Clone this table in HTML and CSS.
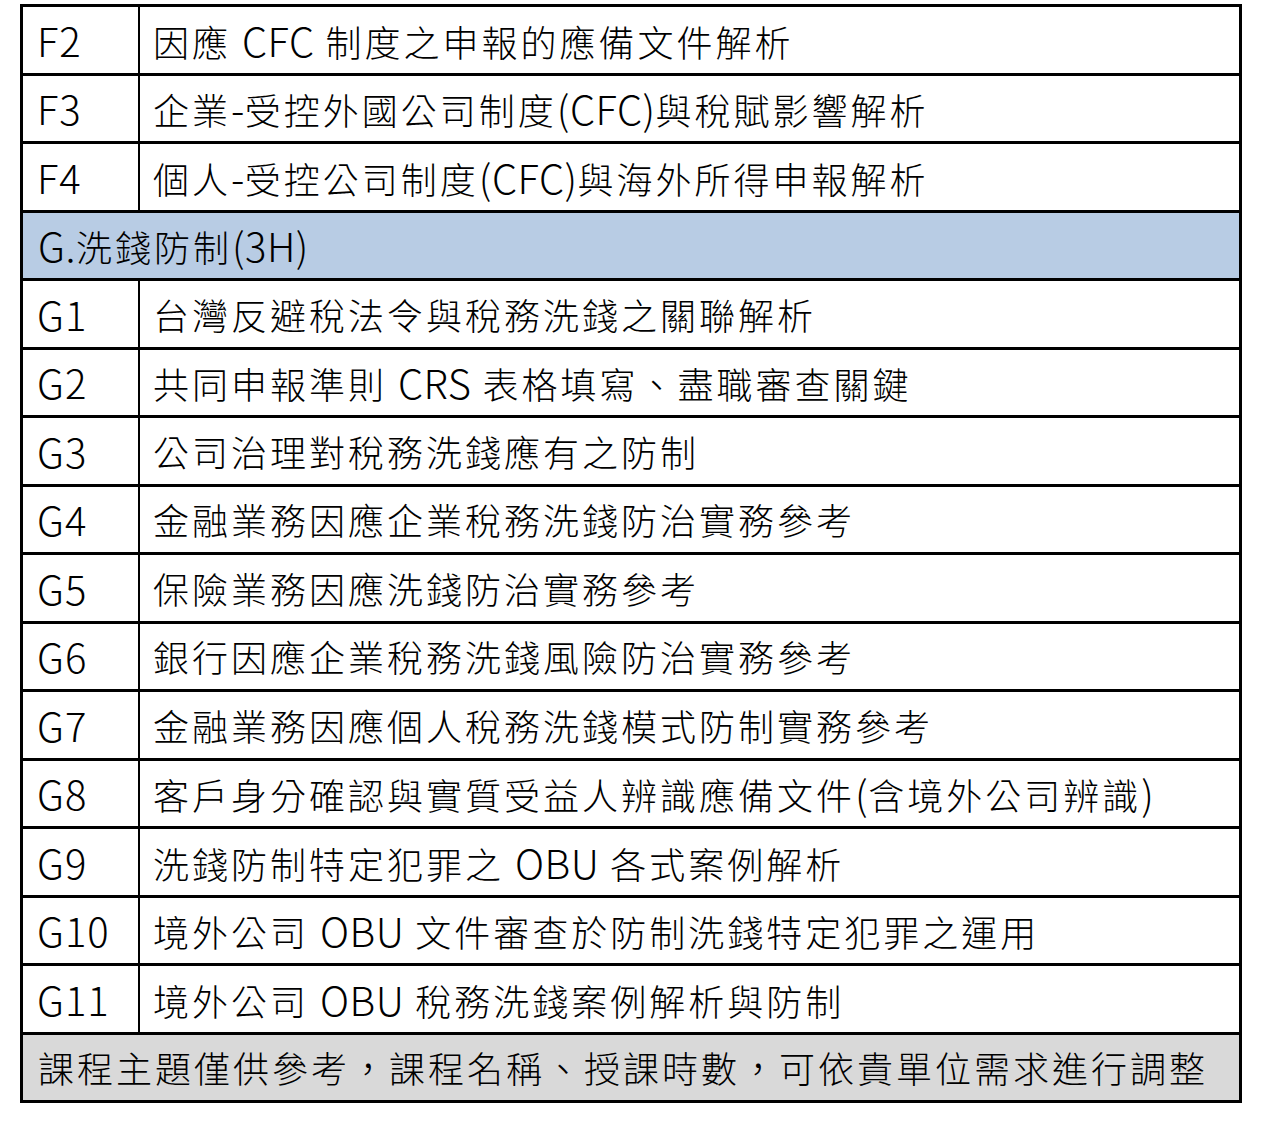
FILE: index.html
```html
<!DOCTYPE html>
<html lang="zh-Hant">
<head>
<meta charset="utf-8">
<title>課程主題</title>
<link rel="stylesheet" href="styles.css">
</head>
<body>
<table class="course-table">
  <tbody>
    <tr><td class="code">F2</td><td class="title">因應 <span class="lat">CFC</span> 制度之申報的應備文件解析</td></tr>
    <tr><td class="code">F3</td><td class="title">企業<span class="lat">-</span>受控外國公司制度<span class="lat">(CFC)</span>與稅賦影響解析</td></tr>
    <tr><td class="code">F4</td><td class="title">個人<span class="lat">-</span>受控公司制度<span class="lat">(CFC)</span>與海外所得申報解析</td></tr>
    <tr class="section"><td colspan="2"><span class="lat">G.</span>洗錢防制<span class="lat">(3H)</span></td></tr>
    <tr><td class="code">G1</td><td class="title">台灣反避稅法令與稅務洗錢之關聯解析</td></tr>
    <tr><td class="code">G2</td><td class="title">共同申報準則 <span class="lat">CRS</span> 表格填寫、盡職審查關鍵</td></tr>
    <tr><td class="code">G3</td><td class="title">公司治理對稅務洗錢應有之防制</td></tr>
    <tr><td class="code">G4</td><td class="title">金融業務因應企業稅務洗錢防治實務參考</td></tr>
    <tr><td class="code">G5</td><td class="title">保險業務因應洗錢防治實務參考</td></tr>
    <tr><td class="code">G6</td><td class="title">銀行因應企業稅務洗錢風險防治實務參考</td></tr>
    <tr><td class="code">G7</td><td class="title">金融業務因應個人稅務洗錢模式防制實務參考</td></tr>
    <tr><td class="code">G8</td><td class="title">客戶身分確認與實質受益人辨識應備文件<span class="lat">(</span>含境外公司辨識<span class="lat">)</span></td></tr>
    <tr><td class="code">G9</td><td class="title">洗錢防制特定犯罪之 <span class="lat">OBU</span> 各式案例解析</td></tr>
    <tr><td class="code">G10</td><td class="title">境外公司 <span class="lat">OBU</span> 文件審查於防制洗錢特定犯罪之運用</td></tr>
    <tr><td class="code">G11</td><td class="title">境外公司 <span class="lat">OBU</span> 稅務洗錢案例解析與防制</td></tr>
    <tr class="note"><td colspan="2">課程主題僅供參考，課程名稱、授課時數，可依貴單位需求進行調整</td></tr>
  </tbody>
</table>
</body>
</html>
```
FILE: styles.css
```css
html, body {
  margin: 0;
  padding: 0;
  background: #ffffff;
}
body {
  padding: 4px 0 0 20px;
  font-family: "Noto Sans CJK TC", "Noto Sans", sans-serif;
  color: #000;
}
.course-table {
  border-collapse: collapse;
  width: 1222px;
  border: 3px solid #000;
  font-size: 36px;
  font-weight: 300;
  letter-spacing: 3px;
  line-height: 1;
}
.course-table tr {
  height: 68.5px;
}
.course-table td {
  border-top: 3px solid #000;
  border-bottom: 3px solid #000;
  padding: 0 14px 0 15px;
  vertical-align: middle;
  white-space: nowrap;
}
.course-table .code {
  width: 87px;
  padding-left: 14px;
  font-size: 40px;
  letter-spacing: 1px;
  border-right: 2px solid #000;
}
.course-table .title {
  padding-left: 13px;
}
.lat {
  font-size: 40px;
  letter-spacing: 0.5px;
}
.section td {
  background: #b8cce4;
}
.note td {
  background: #d9d9d9;
}
```
